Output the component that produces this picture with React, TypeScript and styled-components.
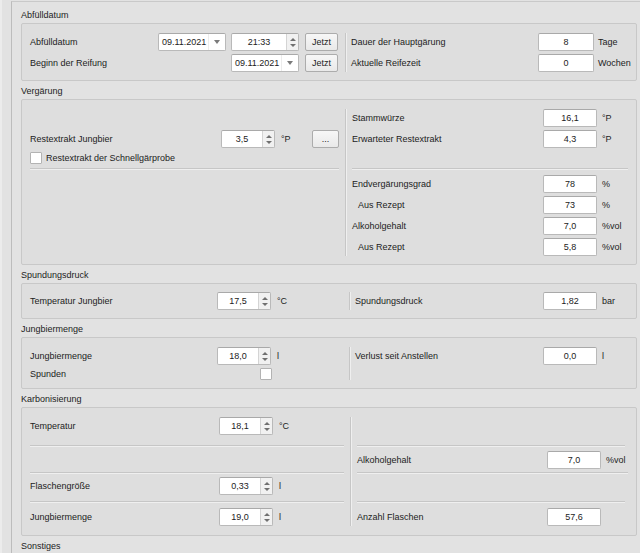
import React from 'react';
import styled, { createGlobalStyle } from 'styled-components';

interface GroupProps {
	title: string;
	pt?: number;
	pb?: number;
	children: React.ReactNode;
}

const Group: React.FC<GroupProps> = ({ title, pt = 9, pb = 9, children }) => (
	<GroupWrap>
		<GroupTitle>{title}</GroupTitle>
		<Box $pt={pt} $pb={pb}>
			{children}
		</Box>
	</GroupWrap>
);

const SpinBox: React.FC<{ value: string; width?: number }> = ({ value, width = 54 }) => (
	<Spin $w={width}>
		<SpinValue>{value}</SpinValue>
		<SpinArrows>
			<ArrowUp />
			<ArrowDown />
		</SpinArrows>
	</Spin>
);

const DateEdit: React.FC<{ value: string }> = ({ value }) => (
	<DateBox>
		<DateValue>{value}</DateValue>
		<DropArea>
			<DropArrow />
		</DropArea>
	</DateBox>
);

// one label / field / unit line on the right side of a group
interface ValueRowProps {
	label: string;
	value: string;
	unit?: string;
	fieldWidth?: number;
	unitGap?: number;
	unitWidth?: number;
	indent?: boolean;
}

const ValueRow: React.FC<ValueRowProps> = ({
	label,
	value,
	unit = '',
	fieldWidth = 54,
	unitGap = 5,
	unitWidth = 26,
	indent
}) => (
	<Row>
		<Label $indent={indent}>{label}</Label>
		<LineEdit $w={fieldWidth}>{value}</LineEdit>
		<Unit $ml={unitGap} $w={unitWidth}>
			{unit}
		</Unit>
	</Row>
);

interface SpinRowProps {
	label: string;
	value: string;
	unit: string;
	unitWidth: number;
}

const SpinRow: React.FC<SpinRowProps> = ({ label, value, unit, unitWidth }) => (
	<Row>
		<Label>{label}</Label>
		<SpinBox value={value} />
		<Unit $ml={6} $w={unitWidth}>
			{unit}
		</Unit>
	</Row>
);

export default function App() {
	return (
		<>
			<GlobalStyle />
			<Window>
				<SideStrip />
				<Scroll>
					<Group title="Abfülldatum" pt={9} pb={8}>
						<Column $w={308}>
							<Row>
								<Label>Abfülldatum</Label>
								<DateEdit value="09.11.2021" />
								<TimeEdit>
									<SpinValue>21:33</SpinValue>
									<SpinArrows>
										<ArrowUp />
										<ArrowDown />
									</SpinArrows>
								</TimeEdit>
								<Button $w={33} $ml={6}>
									Jetzt
								</Button>
							</Row>
							<Row $mt={3}>
								<Label>Beginn der Reifung</Label>
								<DateEdit value="09.11.2021" />
								<Button $w={33} $ml={6}>
									Jetzt
								</Button>
							</Row>
						</Column>
						<VSep $ml={7} $mr={4} />
						<Column $grow>
							<ValueRow label="Dauer der Hauptgärung" value="8" unit="Tage" fieldWidth={56} unitGap={4} unitWidth={30} />
							<Spacer $h={3} />
							<ValueRow label="Aktuelle Reifezeit" value="0" unit="Wochen" fieldWidth={56} unitGap={4} unitWidth={30} />
						</Column>
					</Group>

					<Group title="Vergärung" pb={8}>
						<Column $w={309}>
							<Spacer $h={21} />
							<Row>
								<Label>Restextrakt Jungbier</Label>
								<SpinBox value="3,5" />
								<Unit $ml={6} $w={31}>
									°P
								</Unit>
								<Button $w={27}>...</Button>
							</Row>
							<CheckRow $mt={4}>
								<Check />
								<CheckLabel>Restextrakt der Schnellgärprobe</CheckLabel>
							</CheckRow>
							<HLine $mt={4} />
						</Column>
						<VSep $ml={6} $mr={5} />
						<Column $grow>
							<ValueRow label="Stammwürze" value="16,1" unit="°P" />
							<Spacer $h={3} />
							<ValueRow label="Erwarteter Restextrakt" value="4,3" unit="°P" />
							<HLine $mt={20} />
							<Spacer $h={5} />
							<ValueRow label="Endvergärungsgrad" value="78" unit="%" />
							<Spacer $h={3} />
							<ValueRow label="Aus Rezept" value="73" unit="%" indent />
							<Spacer $h={3} />
							<ValueRow label="Alkoholgehalt" value="7,0" unit="%vol" />
							<Spacer $h={3} />
							<ValueRow label="Aus Rezept" value="5,8" unit="%vol" indent />
						</Column>
					</Group>

					<Group title="Spundungsdruck" pt={8} pb={8}>
						<Column $w={313}>
							<SpinRow label="Temperatur Jungbier" value="17,5" unit="°C" unitWidth={66} />
						</Column>
						<VSep $ml={6} $mr={4} />
						<Column $grow>
							<ValueRow label="Spundungsdruck" value="1,82" unit="bar" />
						</Column>
					</Group>

					<Group title="Jungbiermenge" pt={9} pb={8}>
						<Column $w={313}>
							<SpinRow label="Jungbiermenge" value="18,0" unit="l" unitWidth={66} />
							<CheckRow $mt={3}>
								<Label>Spunden</Label>
								<Check $mr={71} />
							</CheckRow>
						</Column>
						<VSep $ml={6} $mr={4} />
						<Column $grow>
							<ValueRow label="Verlust seit Anstellen" value="0,0" unit="l" />
						</Column>
					</Group>

					<Group title="Karbonisierung">
						<Column $w={314}>
							<SpinRow label="Temperatur" value="18,1" unit="°C" unitWidth={65} />
							<HLine $mt={10} />
							<HLine $mt={25} />
							<Spacer $h={3} />
							<SpinRow label="Flaschengröße" value="0,33" unit="l" unitWidth={65} />
							<HLine $mt={6} />
							<Spacer $h={5} />
							<SpinRow label="Jungbiermenge" value="19,0" unit="l" unitWidth={65} />
						</Column>
						<VSep $ml={6} $mr={5} />
						<Column $grow>
							<HLine $mt={28} $mr={3} />
							<Spacer $h={4} />
							<ValueRow label="Alkoholgehalt" value="7,0" unit="%vol" unitWidth={22} />
							<HLine $mt={3} />
							<HLine $mt={27} $mr={3} />
							<Spacer $h={5} />
							<ValueRow label="Anzahl Flaschen" value="57,6" unitWidth={22} />
						</Column>
					</Group>

					<Group title="Sonstiges">
						<Column $grow>
							<Spacer $h={40} />
						</Column>
					</Group>
				</Scroll>
			</Window>
		</>
	);
}

const GlobalStyle = createGlobalStyle`
	html, body {
		margin: 0;
		padding: 0;
	}

	body {
		background: #e2e2e2;
		font-family: 'Liberation Sans', Arial, sans-serif;
		font-size: 9px;
		color: #222222;
	}
`;

const Window = styled.div`
	display: flex;
	width: 640px;
	height: 553px;
	overflow: hidden;
	background: #e2e2e2;
`;

const SideStrip = styled.div`
	flex: none;
	width: 11px;
	box-sizing: border-box;
	border-left: 2px solid #ececec;
`;

const Scroll = styled.div`
	flex: 1;
	display: flex;
	flex-direction: column;
	gap: 2px;
	margin-top: 1px;
	padding: 5px 3px 0 9px;
	border-left: 1px solid #bcbcbc;
	border-top: 1px solid #c9c9c9;
`;

const GroupWrap = styled.section`
	display: flex;
	flex-direction: column;
	flex: none;
`;

const GroupTitle = styled.div`
	height: 16px;
	line-height: 16px;
	white-space: nowrap;
`;

const Box = styled.div<{ $pt: number; $pb: number }>`
	display: flex;
	align-items: stretch;
	padding: ${({ $pt }) => $pt}px 8px ${({ $pb }) => $pb}px;
	background: #dedede;
	border: 1px solid #c8c8c8;
	border-radius: 2px;
`;

const Column = styled.div<{ $w?: number; $grow?: boolean }>`
	display: flex;
	flex-direction: column;
	flex: ${({ $grow }) => ($grow ? '1' : 'none')};
	width: ${({ $w }) => ($w ? `${$w}px` : 'auto')};
	min-width: 0;
`;

const VSep = styled.div<{ $ml: number; $mr: number }>`
	flex: none;
	width: 0;
	margin: 0 ${({ $mr }) => $mr}px 0 ${({ $ml }) => $ml}px;
	border-left: 1px solid #c6c6c6;
	border-right: 1px solid #efefef;
`;

const HLine = styled.div<{ $mt?: number; $mr?: number }>`
	flex: none;
	height: 0;
	margin-top: ${({ $mt }) => $mt ?? 0}px;
	margin-right: ${({ $mr }) => $mr ?? 0}px;
	border-top: 1px solid #c6c6c6;
	border-bottom: 1px solid #efefef;
`;

const Spacer = styled.div<{ $h: number }>`
	flex: none;
	height: ${({ $h }) => $h}px;
`;

const Row = styled.div<{ $mt?: number }>`
	display: flex;
	align-items: center;
	height: 18px;
	margin-top: ${({ $mt }) => $mt ?? 0}px;
`;

const CheckRow = styled.div<{ $mt?: number }>`
	display: flex;
	align-items: center;
	height: 12px;
	margin-top: ${({ $mt }) => $mt ?? 0}px;
`;

const Label = styled.div<{ $indent?: boolean }>`
	flex: 1;
	min-width: 0;
	padding-left: ${({ $indent }) => ($indent ? 6 : 0)}px;
	white-space: nowrap;
`;

const Unit = styled.div<{ $ml: number; $w: number }>`
	flex: none;
	width: ${({ $w }) => $w}px;
	margin-left: ${({ $ml }) => $ml}px;
	white-space: nowrap;
`;

const fieldBase = `
	box-sizing: border-box;
	flex: none;
	height: 18px;
	background: #ffffff;
	border: 1px solid #b9b9b9;
	border-top-color: #a9a9a9;
	border-radius: 2px;
`;

const LineEdit = styled.div<{ $w: number }>`
	${fieldBase}
	width: ${({ $w }) => $w}px;
	line-height: 16px;
	text-align: center;
`;

const Spin = styled.div<{ $w: number }>`
	${fieldBase}
	display: flex;
	width: ${({ $w }) => $w}px;
`;

const TimeEdit = styled.div`
	${fieldBase}
	display: flex;
	width: 68px;
	margin-left: 5px;
`;

const SpinValue = styled.div`
	flex: 1;
	line-height: 16px;
	text-align: center;
`;

const SpinArrows = styled.div`
	display: flex;
	flex-direction: column;
	justify-content: center;
	align-items: center;
	gap: 3px;
	width: 11px;
	background: #f1f1f1;
	border-left: 1px solid #d4d4d4;
`;

const ArrowUp = styled.span`
	width: 0;
	height: 0;
	border-left: 3px solid transparent;
	border-right: 3px solid transparent;
	border-bottom: 3px solid #707070;
`;

const ArrowDown = styled.span`
	width: 0;
	height: 0;
	border-left: 3px solid transparent;
	border-right: 3px solid transparent;
	border-top: 3px solid #707070;
`;

const DateBox = styled.div`
	${fieldBase}
	display: flex;
	width: 68px;
`;

const DateValue = styled.div`
	flex: 1;
	padding-left: 3px;
	line-height: 16px;
	white-space: nowrap;
`;

const DropArea = styled.div`
	display: flex;
	align-items: center;
	justify-content: center;
	width: 16px;
	border-left: 1px solid #ececec;
`;

const DropArrow = styled.span`
	width: 0;
	height: 0;
	border-left: 3.5px solid transparent;
	border-right: 3.5px solid transparent;
	border-top: 4px solid #7a7a7a;
`;

const Button = styled.div<{ $w: number; $ml?: number }>`
	box-sizing: border-box;
	flex: none;
	width: ${({ $w }) => $w}px;
	height: 18px;
	margin-left: ${({ $ml }) => $ml ?? 0}px;
	line-height: 16px;
	text-align: center;
	background: linear-gradient(#f7f7f7, #e9e9e9);
	border: 1px solid #acacac;
	border-radius: 2px;
`;

const Check = styled.div<{ $mr?: number }>`
	box-sizing: border-box;
	flex: none;
	width: 12px;
	height: 12px;
	margin-right: ${({ $mr }) => $mr ?? 0}px;
	background: #ffffff;
	border: 1px solid #b3b3b3;
	border-radius: 1px;
`;

const CheckLabel = styled.div`
	margin-left: 4px;
	white-space: nowrap;
`;
